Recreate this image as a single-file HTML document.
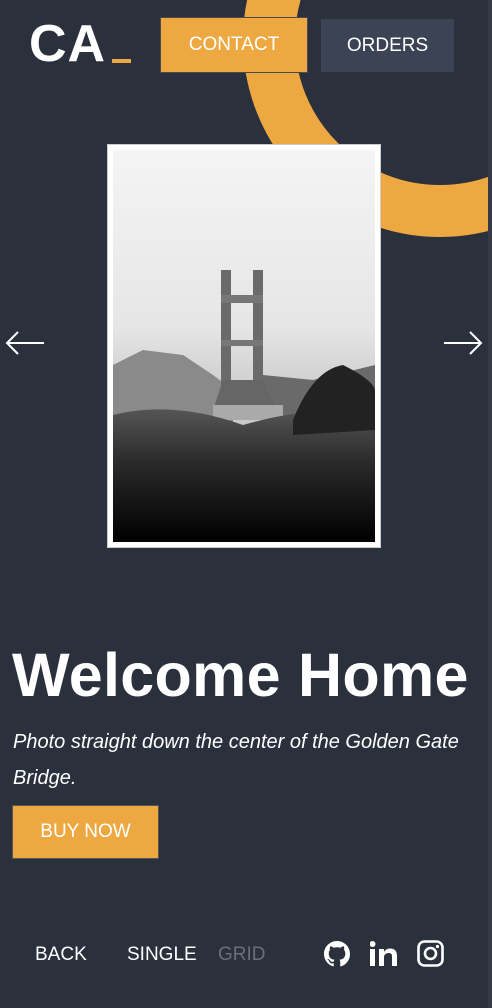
<!DOCTYPE html>
<html><head><meta charset="utf-8"><style>
*{margin:0;padding:0;box-sizing:border-box}
body{width:492px;height:1008px;background:#2b303d;overflow:hidden;position:relative;font-family:"Liberation Sans",sans-serif;color:#fff}
.ring{position:absolute;left:243px;top:-157px;width:394px;height:394px;border-radius:50%;border:52px solid #eda841}
.edge{position:absolute;right:0;top:0;width:4px;height:1008px;background:#353a46}
.logo{position:absolute;left:29px;top:14px;font-size:52px;font-weight:bold;letter-spacing:1px}
.logo span{position:absolute;left:83px;top:45px;width:19px;height:4px;background:#eda841}
.btn{position:absolute;font-size:19px;display:flex;align-items:center;justify-content:center;font-weight:300}
.frame{position:absolute;left:107px;top:144px;width:274px;height:404px;background:#fff;border:1px solid #ccc}
.arrow{position:absolute;top:330px}
h1{position:absolute;left:12px;top:640px;font-size:61px;font-weight:bold;letter-spacing:0.3px;white-space:nowrap}
p{position:absolute;left:13px;top:724px;width:470px;font-size:20px;font-style:italic;font-weight:300;line-height:36px}
.nav{position:absolute;top:944px;font-size:19px;font-weight:300}
</style></head><body>
<div class="ring"></div>
<div class="edge"></div>
<div class="logo">CA<span></span></div>
<div class="btn" style="left:160px;top:17px;width:148px;height:56px;background:#eda841;border:1px solid #4a4a4a">CONTACT</div>
<div class="btn" style="left:321px;top:19px;width:133px;height:53px;background:#3b4354">ORDERS</div>
<div class="frame">
<svg width="262" height="392" viewBox="0 0 262 392" style="position:absolute;left:5px;top:5px">
<defs>
<linearGradient id="sky" x1="0" y1="0" x2="0" y2="1"><stop offset="0" stop-color="#f4f4f4"/><stop offset="0.45" stop-color="#e6e6e6"/><stop offset="0.6" stop-color="#cfcfcf"/><stop offset="1" stop-color="#bbb"/></linearGradient>
<linearGradient id="gr" x1="0" y1="0" x2="0" y2="1"><stop offset="0" stop-color="#555"/><stop offset="0.4" stop-color="#2a2a2a"/><stop offset="1" stop-color="#000"/></linearGradient>
</defs>
<rect width="262" height="392" fill="url(#sky)"/>
<path d="M0 215 L30 200 L70 205 L100 225 L120 240 L120 280 L0 290Z" fill="#8a8a8a"/>
<path d="M150 225 L200 230 L262 215 L262 280 L150 280Z" fill="#6a6a6a"/>
<rect x="108" y="120" width="10" height="135" fill="#6a6a6a"/>
<rect x="140" y="120" width="10" height="135" fill="#6a6a6a"/>
<rect x="108" y="145" width="42" height="8" fill="#777"/>
<rect x="108" y="190" width="42" height="6" fill="#777"/>
<path d="M100 260 L110 230 L150 230 L165 262Z" fill="#666"/>
<rect x="100" y="255" width="70" height="15" fill="#aaa"/>
<path d="M0 265 Q60 250 130 275 Q200 255 262 262 L262 392 L0 392Z" fill="url(#gr)"/>
<path d="M180 270 Q200 220 230 215 Q260 230 262 240 L262 280 L180 285Z" fill="#222"/>
</svg>
</div>
<svg class="arrow" style="left:5px" width="40" height="26" viewBox="0 0 40 26"><path d="M39 13H2M13 2L2 13L13 24" stroke="#fff" stroke-width="2" fill="none"/></svg>
<svg class="arrow" style="left:443px" width="40" height="26" viewBox="0 0 40 26"><path d="M1 13H38M27 2L38 13L27 24" stroke="#fff" stroke-width="2" fill="none"/></svg>
<h1>Welcome Home</h1>
<p>Photo straight down the center of the Golden Gate Bridge.</p>
<div class="btn" style="left:12px;top:805px;width:147px;height:54px;background:#eda841;border:1px solid #555">BUY NOW</div>
<div class="nav" style="left:35px">BACK</div>
<div class="nav" style="left:127px">SINGLE</div>
<div class="nav" style="left:218px;color:#6a6e77">GRID</div>
<svg style="position:absolute;left:324px;top:941px" width="26" height="26" viewBox="0 0 16 16"><path fill="#fff" d="M8 0C3.58 0 0 3.58 0 8c0 3.54 2.29 6.53 5.47 7.59.4.07.55-.17.55-.38 0-.19-.01-.82-.01-1.49-2.01.37-2.53-.49-2.69-.94-.09-.23-.48-.94-.82-1.13-.28-.15-.68-.52-.01-.53.63-.01 1.08.58 1.23.82.72 1.21 1.87.87 2.33.66.07-.52.28-.87.51-1.07-1.78-.2-3.64-.89-3.64-3.95 0-.87.31-1.59.82-2.15-.08-.2-.36-1.02.08-2.12 0 0 .67-.21 2.2.82.64-.18 1.32-.27 2-.27.68 0 1.36.09 2 .27 1.53-1.04 2.2-.82 2.2-.82.44 1.1.16 1.92.08 2.12.51.56.82 1.27.82 2.15 0 3.07-1.87 3.75-3.65 3.95.29.25.54.73.54 1.48 0 1.07-.01 1.93-.01 2.2 0 .21.15.46.55.38A8.013 8.013 0 0016 8c0-4.42-3.58-8-8-8z"/></svg>
<svg style="position:absolute;left:370px;top:941px" width="27" height="25" viewBox="0 0 27 25"><rect x="0" y="8" width="5" height="17" fill="#fff"/><circle cx="2.5" cy="3" r="3" fill="#fff"/><path d="M9 8h5v3c1-2 3-3.5 6-3.5 4 0 7 2 7 7V25h-5V15.5c0-2.5-1-3.5-3-3.5s-5 1-5 4V25H9Z" fill="#fff"/></svg>
<svg style="position:absolute;left:417px;top:940px" width="27" height="27" viewBox="0 0 27 27"><rect x="1.5" y="1.5" width="24" height="24" rx="6" stroke="#fff" stroke-width="2.6" fill="none"/><circle cx="13.5" cy="13.5" r="5.5" stroke="#fff" stroke-width="2.6" fill="none"/><circle cx="20.5" cy="6.5" r="1.6" fill="#fff"/></svg>
</body></html>
